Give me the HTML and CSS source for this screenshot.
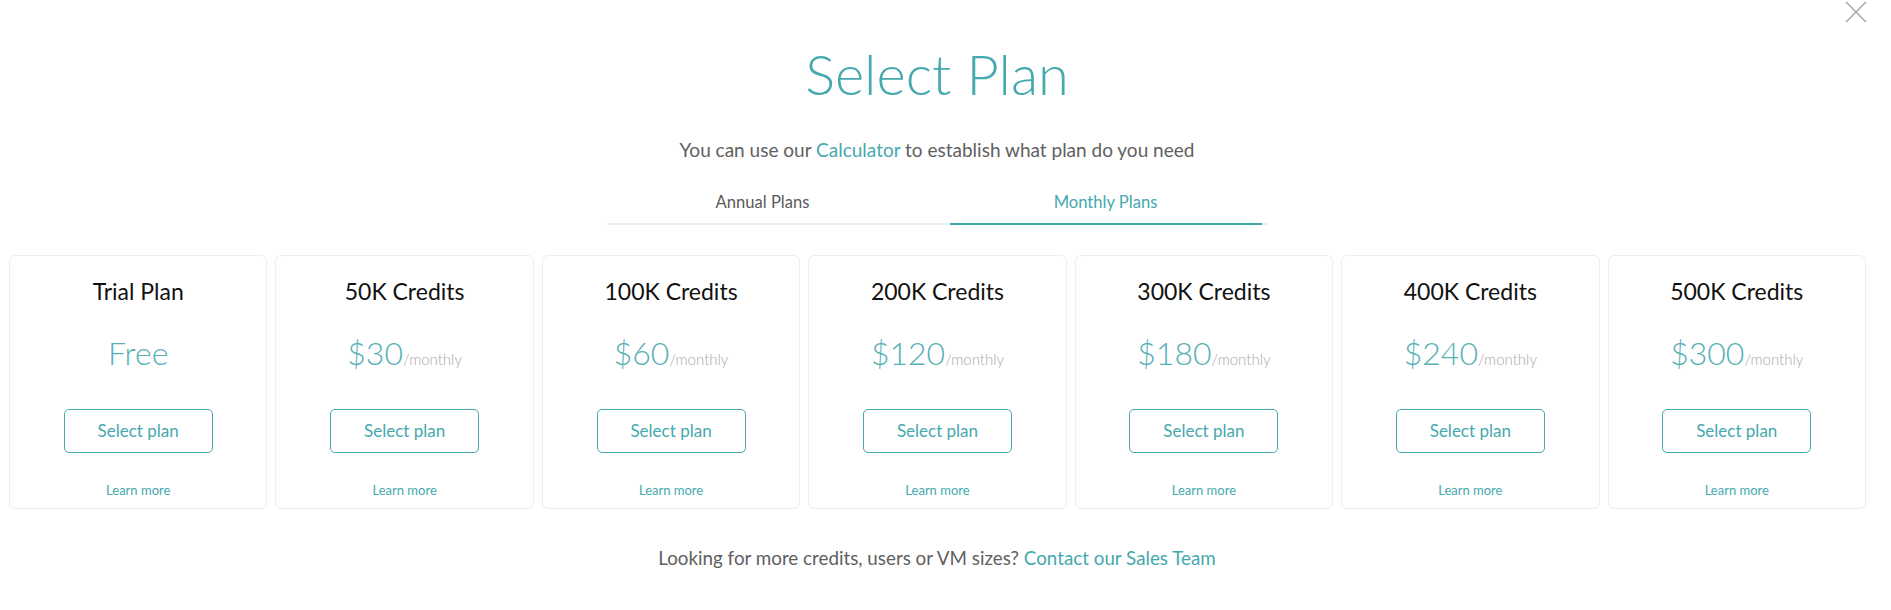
FILE: index.html
```html
<!DOCTYPE html>
<html lang="en">
<head>
<meta charset="utf-8">
<title>Select Plan</title>
<link rel="stylesheet" href="styles.css">
</head>
<body>
<div class="page">
  <button class="close" aria-label="Close">
    <svg width="22" height="22" viewBox="0 0 22 22"><path d="M1 1 L21 21 M21 1 L1 21" stroke="#a9a9a9" stroke-width="1.6" fill="none"/></svg>
  </button>
  <h1 class="title">Select Plan</h1>
  <p class="subtitle">You can use our <a class="link" href="#">Calculator</a> to establish what plan do you need</p>
  <div class="tabs">
    <div class="tab">Annual Plans</div>
    <div class="tab active">Monthly Plans</div>
  </div>
  <div class="cards">
    <div class="card">
      <div class="card-title">Trial Plan</div>
      <div class="price"><span class="amount">Free</span></div>
      <button class="select">Select plan</button>
      <a class="learn" href="#">Learn more</a>
    </div>
    <div class="card">
      <div class="card-title">50K Credits</div>
      <div class="price"><span class="amount">$30</span><span class="per">/monthly</span></div>
      <button class="select">Select plan</button>
      <a class="learn" href="#">Learn more</a>
    </div>
    <div class="card">
      <div class="card-title">100K Credits</div>
      <div class="price"><span class="amount">$60</span><span class="per">/monthly</span></div>
      <button class="select">Select plan</button>
      <a class="learn" href="#">Learn more</a>
    </div>
    <div class="card">
      <div class="card-title">200K Credits</div>
      <div class="price"><span class="amount">$120</span><span class="per">/monthly</span></div>
      <button class="select">Select plan</button>
      <a class="learn" href="#">Learn more</a>
    </div>
    <div class="card">
      <div class="card-title">300K Credits</div>
      <div class="price"><span class="amount">$180</span><span class="per">/monthly</span></div>
      <button class="select">Select plan</button>
      <a class="learn" href="#">Learn more</a>
    </div>
    <div class="card">
      <div class="card-title">400K Credits</div>
      <div class="price"><span class="amount">$240</span><span class="per">/monthly</span></div>
      <button class="select">Select plan</button>
      <a class="learn" href="#">Learn more</a>
    </div>
    <div class="card">
      <div class="card-title">500K Credits</div>
      <div class="price"><span class="amount">$300</span><span class="per">/monthly</span></div>
      <button class="select">Select plan</button>
      <a class="learn" href="#">Learn more</a>
    </div>
  </div>
  <p class="footer">Looking for more credits, users or VM sizes? <a class="link" href="#">Contact our Sales Team</a></p>
</div>
</body>
</html>
```

FILE: styles.css
```css
* { box-sizing: border-box; }
html, body { margin: 0; padding: 0; background: #fff; }
body {
  font-family: Lato, "Open Sans", sans-serif;
  color: #5f5f5f;
}
.page {
  position: relative;
  width: 1874px;
  display: flex;
  flex-direction: column;
  align-items: center;
  padding-top: 40px;
  padding-bottom: 40px;
}
.close {
  position: absolute;
  top: 1px;
  right: 7px;
  width: 22px;
  height: 22px;
  padding: 0;
  border: 0;
  background: none;
  cursor: pointer;
}
.close svg { display: block; }
.title {
  margin: 0;
  font-size: 56px;
  line-height: 1.2;
  font-weight: 300;
  color: #45a9ae;
}
.subtitle {
  margin: 32px 0 0;
  font-size: 19px;
  line-height: 1.2;
  color: #606060;
}
.link {
  color: #45a9ae;
  text-decoration: none;
}
.tabs {
  margin-top: 31px;
  width: 661px;
  display: flex;
  gap: 31px;
  border-bottom: 2px solid #eeeeee;
}
.tab {
  width: 312px;
  text-align: center;
  font-size: 16.6px;
  line-height: 18px;
  padding: 0 0 12px;
  color: #5a5a5a;
}
.tab.active {
  color: #45a9ae;
  border-bottom: 2px solid #3fa6a9;
  margin-bottom: -2px;
}
.cards {
  margin-top: 30px;
  width: 100%;
  padding: 0 8px 0 9px;
  display: flex;
  gap: 8px;
}
.card {
  flex: 1 1 0;
  height: 254px;
  border: 1px solid #eeeeee;
  border-radius: 6px;
  display: flex;
  flex-direction: column;
  align-items: center;
  padding-top: 22px;
}
.card-title {
  font-size: 23px;
  line-height: 27px;
  color: #111;
}
.price {
  margin-top: 29px;
  height: 38px;
  line-height: 38px;
  white-space: nowrap;
}
.amount {
  font-size: 32px;
  font-weight: 300;
  color: #55b0b5;
}
.per {
  font-size: 15px;
  font-weight: 300;
  color: #a8a8a8;
}
.select {
  margin-top: 37px;
  width: 149px;
  height: 44px;
  border: 1px solid #45a9ae;
  border-radius: 5px;
  background: #fff;
  font-family: inherit;
  font-size: 17px;
  color: #45a9ae;
  cursor: pointer;
}
.learn {
  margin-top: 29px;
  font-size: 13px;
  line-height: 16px;
  color: #45a9ae;
  text-decoration: none;
}
.footer {
  margin: 38px 0 0;
  font-size: 18.8px;
  line-height: 1.2;
  color: #606060;
}
```
